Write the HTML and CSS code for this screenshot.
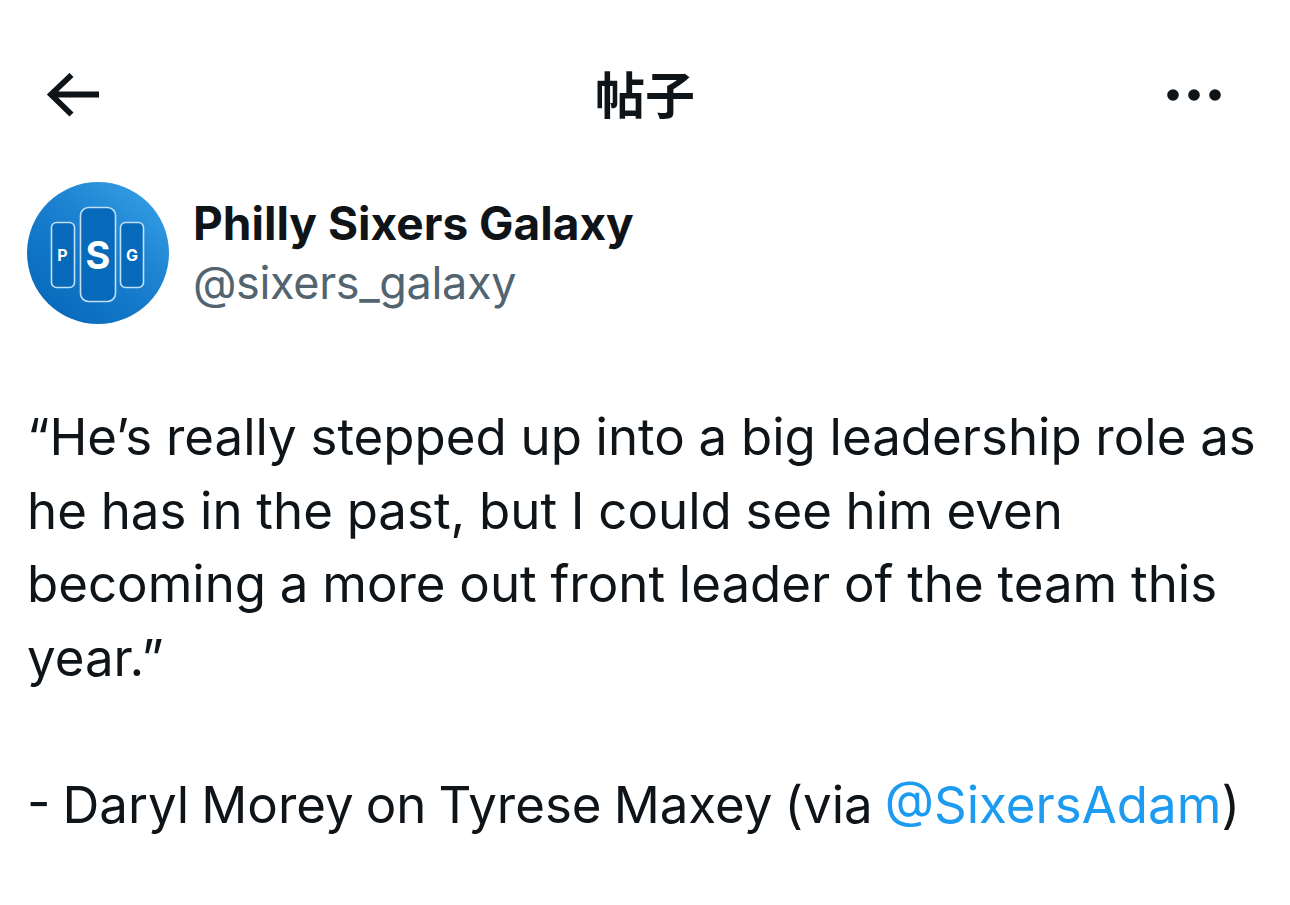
FILE: index.html
```html
<!DOCTYPE html>
<html lang="zh">
<head>
<meta charset="utf-8">
<title>帖子</title>
<link rel="stylesheet" href="styles.css">
</head>
<body>
<main class="page">
  <header class="topbar">
    <svg class="back" width="54" height="44" viewBox="0 0 54 44"><path d="M53 21.500H5M25.500 2 5 21.500 25.500 41.500" fill="none" stroke="#0f1419" stroke-width="5.800"/></svg>
    <h1 class="title">帖子</h1>
    <svg class="more" width="56" height="12" viewBox="0 0 56 12"><circle cx="6" cy="6" r="5.8" fill="#0f1419"/><circle cx="27" cy="6" r="5.8" fill="#0f1419"/><circle cx="48" cy="6" r="5.8" fill="#0f1419"/></svg>
  </header>
  <section class="author">
    <svg class="avatar" width="142" height="142" viewBox="0 0 142 142">
      <defs><linearGradient id="g" x1="1" y1="0" x2="0.2" y2="1"><stop offset="0" stop-color="#3ba3ea"/><stop offset="0.5" stop-color="#1a80cf"/><stop offset="1" stop-color="#0668ba"/></linearGradient></defs>
      <circle cx="71" cy="71" r="71" fill="url(#g)"/>
      <rect x="24.500" y="40.500" width="23" height="65" rx="5" fill="#0669ba" stroke="#c2e0f5" stroke-width="1.600"/>
      <rect x="53.500" y="25.500" width="35" height="94" rx="8" fill="#0669ba" stroke="#c2e0f5" stroke-width="1.600"/>
      <rect x="93.500" y="40.500" width="23" height="65" rx="5" fill="#0669ba" stroke="#c2e0f5" stroke-width="1.600"/>
      <text x="35.500" y="79" class="av-small">P</text>
      <text x="71" y="87" class="av-big">S</text>
      <text x="105" y="79" class="av-small">G</text>
    </svg>
    <div class="names">
      <div class="name">Philly Sixers Galaxy</div>
      <div class="handle">@sixers_galaxy</div>
    </div>
  </section>
  <article class="tweet">
    <p class="line">“He’s really stepped up into a big leadership role as</p>
    <p class="line">he has in the past, but I could see him even</p>
    <p class="line">becoming a more out front leader of the team this</p>
    <p class="line">year.”</p>
    <p class="line blank">&nbsp;</p>
    <p class="line credit">- Daryl Morey on Tyrese Maxey (via <a class="mention" href="#">@SixersAdam</a>)</p>
  </article>
</main>
</body>
</html>
```
FILE: styles.css
```css
* { box-sizing: border-box; }
html, body { margin: 0; padding: 0; background: #fff; }
.page {
  width: 1290px;
  height: 905px;
  overflow: hidden;
  color: #0f1419;
  font-family: Inter, "Noto Sans CJK SC", sans-serif;
}
.topbar {
  display: grid;
  grid-template-columns: 1fr auto 1fr;
  grid-template-rows: 44px;
  align-items: center;
  margin-top: 73px;
  padding: 0 46px;
}
.title {
  margin: 0;
  align-self: start;
  font-family: "Noto Sans CJK SC", sans-serif;
  font-size: 50px;
  font-weight: 700;
  line-height: 38px;
}
.back, .more { display: block; }
.more { justify-self: end; margin-right: 21px; }
.author {
  display: flex;
  align-items: flex-start;
  gap: 24px;
  margin-top: 65px;
  padding-left: 27px;
}
.avatar { display: block; flex: none; }
.av-small { font: 700 16px Inter, sans-serif; fill: #fff; text-anchor: middle; }
.av-big { font: 700 38px Inter, sans-serif; fill: #fff; text-anchor: middle; }
.names { padding-top: 11px; }
.name {
  font-size: 46px;
  font-weight: 700;
  line-height: 60px;
}
.handle {
  font-size: 45px;
  line-height: 60px;
  color: #536471;
  letter-spacing: -0.35px;
}
.tweet { margin-top: 76px; padding-left: 27px; }
.line {
  margin: 0;
  font-size: 51px;
  line-height: 73.500px;
  white-space: nowrap;
  word-spacing: -0.6px;
}
.credit { word-spacing: -2.3px; }
.mention { color: #1d9bf0; text-decoration: none; }
```
